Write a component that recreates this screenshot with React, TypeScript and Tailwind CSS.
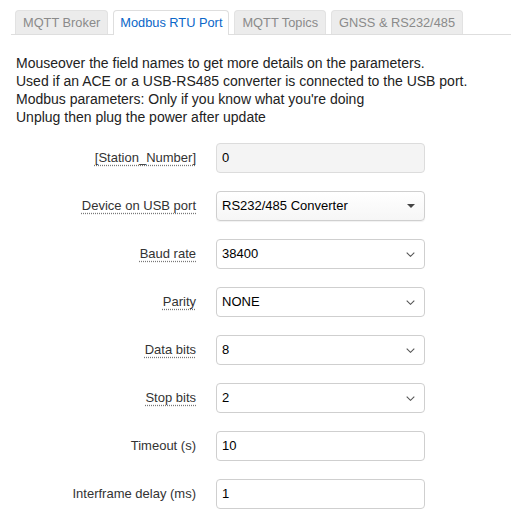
import React from 'react';

const tabs = ['MQTT Broker', 'Modbus RTU Port', 'MQTT Topics', 'GNSS & RS232/485'];

const notes = [
  'Mouseover the field names to get more details on the parameters.',
  'Used if an ACE or a USB-RS485 converter is connected to the USB port.',
  "Modbus parameters: Only if you know what you're doing",
  'Unplug then plug the power after update',
];

type Field = {
  label: string;
  value: string;
  kind: 'text' | 'readonly' | 'caret' | 'chevron';
  hint?: boolean;
};

const fields: Field[] = [
  { label: '[Station_Number]', value: '0', kind: 'readonly', hint: true },
  { label: 'Device on USB port', value: 'RS232/485 Converter', kind: 'caret', hint: true },
  { label: 'Baud rate', value: '38400', kind: 'chevron', hint: true },
  { label: 'Parity', value: 'NONE', kind: 'chevron', hint: true },
  { label: 'Data bits', value: '8', kind: 'chevron', hint: true },
  { label: 'Stop bits', value: '2', kind: 'chevron', hint: true },
  { label: 'Timeout (s)', value: '10', kind: 'text' },
  { label: 'Interframe delay (ms)', value: '1', kind: 'text' },
];

function Chevron() {
  return (
    <svg width="9" height="5" viewBox="0 0 9 5" className="text-[#555]">
      <path d="M0.7 0.7l3.8 3.6 3.8-3.6" fill="none" stroke="currentColor" strokeWidth="1.1" />
    </svg>
  );
}

function Caret() {
  return (
    <svg width="8" height="4" viewBox="0 0 8 4" className="text-[#444]">
      <path d="M0 0h8L4 4z" fill="currentColor" />
    </svg>
  );
}

function Control({ field }: { field: Field }) {
  const base =
    'ml-[20px] flex h-[30px] w-[209px] items-center justify-between rounded-[4px] border pl-[5px] pr-[9px] text-[13px] text-black';

  if (field.kind === 'readonly') {
    return <div className={`${base} border-[#dcdcdc] bg-[#f4f4f4]`}>{field.value}</div>;
  }
  if (field.kind === 'caret') {
    return (
      <div className={`${base} border-[#cfcfcf] bg-gradient-to-b from-white to-[#f6f6f6] shadow-[0_1px_1px_rgba(0,0,0,0.06)]`}>
        <span>{field.value}</span>
        <Caret />
      </div>
    );
  }
  if (field.kind === 'chevron') {
    return (
      <div className={`${base} border-[#cfcfcf] bg-white`}>
        <span>{field.value}</span>
        <Chevron />
      </div>
    );
  }
  return <div className={`${base} border-[#cfcfcf] bg-white`}>{field.value}</div>;
}

export default function App() {
  return (
    <div className="min-h-[527px] w-[511px] bg-white pt-[10px] text-[#333]" style={{ fontFamily: '"Liberation Sans", Arial, sans-serif' }}>
      <div className="ml-[11px] flex gap-[5px] border-b border-[#dedede] pl-[4px]">
        {tabs.map((t, i) => (
          <div
            key={t}
            className={
              i === 1
                ? '-mb-px flex h-[25px] items-center rounded-t-[4px] border border-b-0 border-[#dedede] bg-white px-[6px] text-[12.8px] text-[#0a66c8]'
                : 'flex h-[24px] items-center rounded-t-[4px] border border-b-0 border-[#e2e2e2] bg-[#ececec] px-[7px] text-[12.8px] text-[#8a8a8a]'
            }
          >
            {t}
          </div>
        ))}
      </div>

      <div className="mt-[19px] pl-[16px] text-[14px] leading-[18px] text-[#222]">
        {notes.map((n) => (
          <div key={n}>{n}</div>
        ))}
      </div>

      <div className="mt-[17px] flex flex-col gap-[18px]">
        {fields.map((f) => (
          <div key={f.label} className="flex items-center">
            <div className="w-[196px] text-right text-[13px] text-[#333]">
              <span className={f.hint ? 'underline decoration-dotted decoration-[#777] underline-offset-[3px]' : ''}>
                {f.label}
              </span>
            </div>
            <Control field={f} />
          </div>
        ))}
      </div>
    </div>
  );
}
